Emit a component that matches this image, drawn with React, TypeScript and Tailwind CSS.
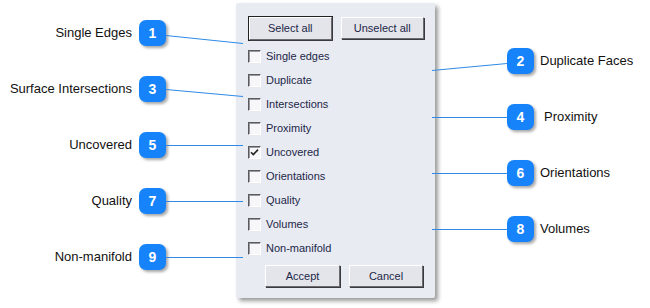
import React from "react";

const leftItems = [
  { n: 1, label: "Single Edges" },
  { n: 3, label: "Surface Intersections" },
  { n: 5, label: "Uncovered" },
  { n: 7, label: "Quality" },
  { n: 9, label: "Non-manifold" },
];
const rightItems = [
  { n: 2, label: "Duplicate Faces" },
  { n: 4, label: "Proximity", pad: true },
  { n: 6, label: "Orientations" },
  { n: 8, label: "Volumes" },
];
const checks = [
  "Single edges",
  "Duplicate",
  "Intersections",
  "Proximity",
  "Uncovered",
  "Orientations",
  "Quality",
  "Volumes",
  "Non-manifold",
];

function Badge({ n }: { n: number }) {
  return (
    <div className="w-[27px] h-[26px] rounded-[7px] bg-[#1683fb] shadow-[2px_2px_3px_rgba(0,0,0,0.35)] flex items-center justify-center text-white font-bold text-[14px] shrink-0">
      {n}
    </div>
  );
}

function WinButton({ children, w, focused }: { children: React.ReactNode; w: string; focused?: boolean }) {
  const inner = (
    <div className="h-full w-full bg-[#e4e5ea] border-t border-l border-t-white border-l-white border-b border-r border-b-[#6b6b70] border-r-[#6b6b70] shadow-[1px_1px_0_#3a3a3e] flex items-center justify-center text-[11px] text-[#1c2748]">
      {children}
    </div>
  );
  if (focused) {
    return <div className={`${w} h-[25px] border border-[#222] bg-[#222]`}>{inner}</div>;
  }
  return <div className={`${w} h-[23px] mt-[1px] pr-[1px] pb-[1px]`}>{inner}</div>;
}

function Check({ checked }: { checked?: boolean }) {
  return (
    <div className="w-[13px] h-[13px] bg-[#f7f7f9] border-t border-l border-t-[#5a5a5e] border-l-[#5a5a5e] border-b border-r border-b-white border-r-white shadow-[inset_1px_1px_0_#9a9aa0] shrink-0 flex items-center justify-center">
      {checked && (
        <svg width="9" height="9" viewBox="0 0 9 9">
          <path d="M1 4.2 L3.3 6.6 L8 1.6" stroke="#222" strokeWidth="1.6" fill="none" />
        </svg>
      )}
    </div>
  );
}

export default function App() {
  return (
    <div
      className="relative w-[650px] h-[308px] bg-white flex overflow-hidden"
      style={{ fontFamily: '"Liberation Sans", Arial, sans-serif' }}
    >
      {/* left column */}
      <div className="w-[236px] pt-[5px] flex flex-col">
        {leftItems.map((it) => (
          <div key={it.n} className="h-[56px] flex items-center justify-end pr-[70px] gap-[7px]">
            <span className="text-[13px] text-[#111]">{it.label}</span>
            <Badge n={it.n} />
          </div>
        ))}
      </div>

      {/* dialog */}
      <div className="mt-[3px] w-[199px] h-[295px] bg-[#e9ebf3] rounded-[2px] shadow-[3px_3px_4px_rgba(0,0,0,0.4)] pt-[13px] pl-[12px] pr-[10px] flex flex-col">
        <div className="flex gap-[8px] h-[25px]">
          <WinButton w="w-[85px]" focused>
            Select all
          </WinButton>
          <WinButton w="w-[85px]">Unselect all</WinButton>
        </div>
        <div className="mt-[3px] flex flex-col">
          {checks.map((c) => (
            <div key={c} className="h-[24px] flex items-center gap-[5px]">
              <Check checked={c === "Uncovered"} />
              <span className="text-[11px] text-[#1c2748]">{c}</span>
            </div>
          ))}
        </div>
        <div className="mt-[4px] flex justify-end gap-[8px] pr-[1px]">
          <WinButton w="w-[76px]">Accept</WinButton>
          <WinButton w="w-[75px]">Cancel</WinButton>
        </div>
      </div>

      {/* right column */}
      <div className="pt-[33px] pl-[72px] flex flex-col">
        {rightItems.map((it) => (
          <div key={it.n} className="h-[56px] flex items-center gap-[6px]">
            <Badge n={it.n} />
            <span className={`text-[13px] text-[#111] ${it.pad ? "pl-[4px]" : ""}`}>{it.label}</span>
          </div>
        ))}
      </div>

      {/* connector lines */}
      <svg className="absolute inset-0 pointer-events-none" width="650" height="308">
        <g stroke="#2f8ae6" strokeWidth="1" fill="none">
          <line x1="166" y1="35.5" x2="243" y2="43.5" />
          <line x1="166" y1="89.5" x2="243" y2="96.5" />
          <line x1="166" y1="145.5" x2="243" y2="145.5" />
          <line x1="166" y1="201.5" x2="243" y2="201.5" />
          <line x1="166" y1="257.5" x2="243" y2="257.5" />
          <line x1="432" y1="70.5" x2="507" y2="63.5" />
          <line x1="432" y1="117.5" x2="507" y2="117.5" />
          <line x1="432" y1="173.5" x2="507" y2="173.5" />
          <line x1="432" y1="229.5" x2="507" y2="229.5" />
        </g>
      </svg>
    </div>
  );
}
